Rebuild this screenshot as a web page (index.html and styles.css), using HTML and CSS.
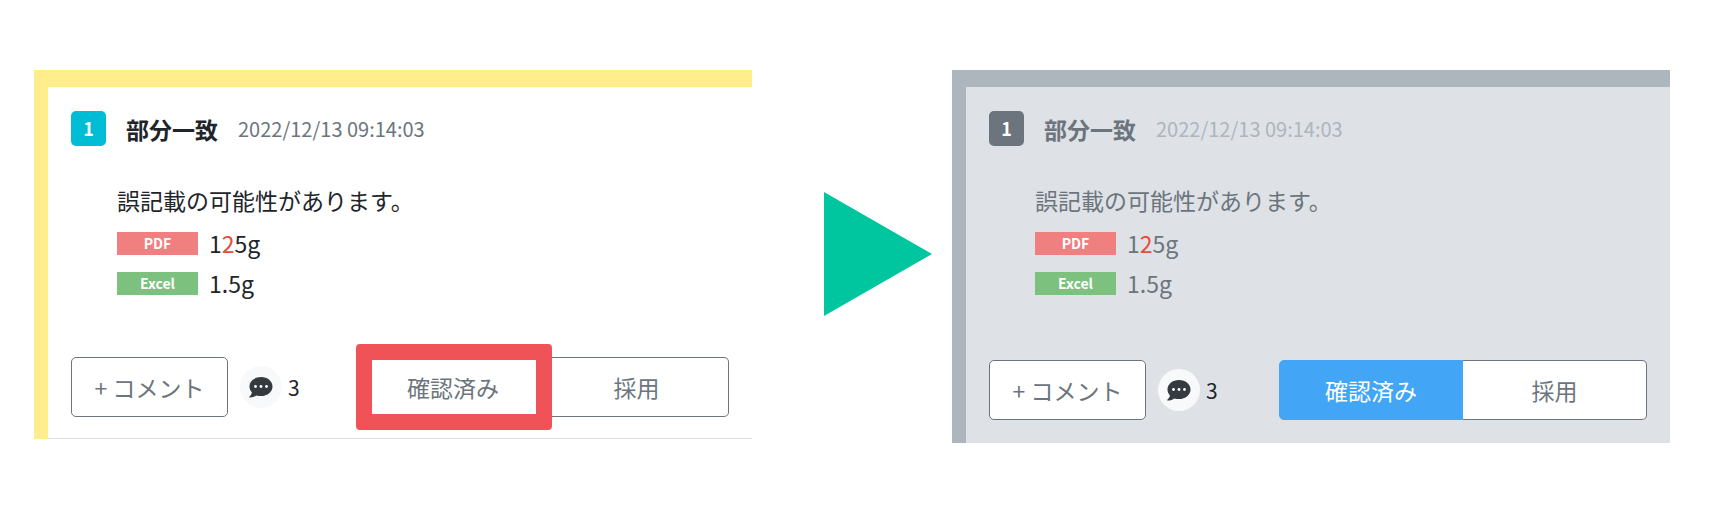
FILE: index.html
```html
<!DOCTYPE html>
<html lang="ja">
<head>
    <meta charset="UTF-8">
    <meta name="viewport" content="width=device-width, initial-scale=1.0">
    <title>確認済み</title>
    <link rel="stylesheet" href="styles.css">
</head>
<body>
<main class="compare">
    <section class="card">
        <header class="card-header">
            <span class="badge">1</span>
            <h2 class="title">部分一致</h2>
            <time class="date" datetime="2022-12-13T09:14:03">2022/12/13 09:14:03</time>
        </header>
        <div class="card-body">
            <p class="message">誤記載の可能性があります。</p>
            <div class="row"><span class="label pdf">PDF</span><span class="value">1<span class="diff">2</span>5g</span></div>
            <div class="row"><span class="label excel">Excel</span><span class="value">1.5g</span></div>
        </div>
        <footer class="card-footer">
            <button type="button" class="btn btn-comment">+ コメント</button>
            <span class="comments">
                <span class="bubble">
                    <svg width="24" height="21" viewBox="0 0 24 21">
                        <path fill="#343a40" d="M12 0C5.400 0 .5 4.200 .5 9.500c0 2.300 .9 4.300 2.400 5.900C2.500 17.400 1.300 18.800 .3 19.800c-.3 .3-.1 .8 .4 .8 2.900 0 5.200-1.200 6.500-2.200 1.500 .5 3.100 .7 4.800 .7 6.500 0 11.500-4.300 11.500-9.600S18.500 0 12 0z"/>
                        <circle cx="6.500" cy="9.500" r="1.400" fill="#fff"/>
                        <circle cx="12" cy="9.500" r="1.400" fill="#fff"/>
                        <circle cx="17.500" cy="9.500" r="1.400" fill="#fff"/>
                    </svg>
                </span>
                <span class="count">3</span>
            </span>
            <div class="btn-group">
                <button type="button" class="btn highlight">確認済み</button>
                <button type="button" class="btn">採用</button>
            </div>
        </footer>
    </section>

    <div class="arrow">
        <svg width="108" height="124" viewBox="0 0 108 124">
            <path fill="#00c6a0" d="M0 0L108 62L0 124z"/>
        </svg>
    </div>

    <section class="card checked">
        <header class="card-header">
            <span class="badge">1</span>
            <h2 class="title">部分一致</h2>
            <time class="date" datetime="2022-12-13T09:14:03">2022/12/13 09:14:03</time>
        </header>
        <div class="card-body">
            <p class="message">誤記載の可能性があります。</p>
            <div class="row"><span class="label pdf">PDF</span><span class="value">1<span class="diff">2</span>5g</span></div>
            <div class="row"><span class="label excel">Excel</span><span class="value">1.5g</span></div>
        </div>
        <footer class="card-footer">
            <button type="button" class="btn btn-comment">+ コメント</button>
            <span class="comments">
                <span class="bubble">
                    <svg width="24" height="21" viewBox="0 0 24 21">
                        <path fill="#343a40" d="M12 0C5.400 0 .5 4.200 .5 9.500c0 2.300 .9 4.300 2.400 5.900C2.500 17.400 1.300 18.800 .3 19.800c-.3 .3-.1 .8 .4 .8 2.900 0 5.200-1.200 6.500-2.200 1.500 .5 3.100 .7 4.800 .7 6.500 0 11.500-4.300 11.500-9.600S18.500 0 12 0z"/>
                        <circle cx="6.500" cy="9.500" r="1.400" fill="#fff"/>
                        <circle cx="12" cy="9.500" r="1.400" fill="#fff"/>
                        <circle cx="17.500" cy="9.500" r="1.400" fill="#fff"/>
                    </svg>
                </span>
                <span class="count">3</span>
            </span>
            <div class="btn-group">
                <button type="button" class="btn active">確認済み</button>
                <button type="button" class="btn">採用</button>
            </div>
        </footer>
    </section>
</main>
</body>
</html>
```

FILE: styles.css
```css
* {
    box-sizing: border-box;
}
body {
    font-family: "Noto Sans CJK JP", sans-serif;
    font-size: 23px;
    line-height: 34px;
    color: #212529;
    background-color: #fff;
    margin: 0;
}
.compare {
    display: flex;
    align-items: flex-start;
    padding: 70px 50px 66px 34px;
}
.card {
    flex: 1;
    padding: 24px 23px 22px 23px;
    border-top: 17px solid #ffee8b;
    border-left: 14px solid #ffee8b;
    background: linear-gradient(#dee2e6, #dee2e6) bottom / 100% 1px no-repeat #fff;
}
.card-header {
    display: flex;
    align-items: center;
}
.badge {
    width: 35px;
    height: 35px;
    border-radius: 5px;
    background-color: #00bcd4;
    color: #fff;
    font-size: 18px;
    font-weight: bold;
    line-height: 35px;
    text-align: center;
}
.title {
    margin: 0 20px;
    font-size: 23px;
}
.date {
    color: #6c757d;
    font-size: 20px;
}
.card-body {
    padding: 37px 0 0 46px;
}
.message {
    margin: 0 0 6px;
}
.row {
    display: flex;
    align-items: center;
    gap: 11px;
    height: 40px;
}
.label {
    width: 81px;
    height: 23px;
    color: #fff;
    font-size: 14px;
    font-weight: bold;
    line-height: 23px;
    text-align: center;
}
.pdf {
    background-color: #f08080;
}
.excel {
    background-color: #7dc17e;
}
.diff {
    color: #e74c3c;
}
.card-footer {
    display: flex;
    align-items: center;
    padding-top: 54px;
}
.btn {
    height: 60px;
    padding: 0;
    border: 1px solid #6c757d;
    border-radius: 5px;
    background-color: #fff;
    color: #6c757d;
    font-family: inherit;
    font-size: 23px;
    cursor: pointer;
}
.btn-comment {
    width: 157px;
}
.comments {
    display: flex;
    align-items: center;
    gap: 6px;
    margin-left: 12px;
}
.bubble {
    display: flex;
    align-items: center;
    justify-content: center;
    width: 42px;
    height: 42px;
    border-radius: 50%;
    background-color: #f8f9fa;
}
.count {
    font-size: 21px;
}
.btn-group {
    display: flex;
    width: 368px;
    margin-left: auto;
}
.btn-group .btn {
    width: 50%;
}
.btn-group .btn:first-child {
    border-top-right-radius: 0;
    border-bottom-right-radius: 0;
}
.btn-group .btn:last-child {
    border-left: 0;
    border-top-left-radius: 0;
    border-bottom-left-radius: 0;
}
.btn-group .active {
    border-color: #42a5f5;
    background-color: #42a5f5;
    color: #fff;
}
/* red frame around the button to press */
.highlight {
    position: relative;
    border-color: transparent;
}
.highlight::after {
    content: "";
    position: absolute;
    inset: -14px -8px -14px -6px;
    border: 16px solid #ef5357;
    border-radius: 4px;
}
.arrow {
    width: 200px;
    padding: 122px 0 0 72px;
}
.arrow svg {
    display: block;
}
.checked {
    padding-bottom: 23px;
    border-color: #adb5bd;
    background: #dee2e6;
    color: #6c757d;
}
.checked .badge {
    background-color: #6c757d;
}
.checked .date {
    color: #adb5bd;
}
.checked .card-footer {
    padding-top: 57px;
}
.checked .count {
    color: #212529;
}
```
